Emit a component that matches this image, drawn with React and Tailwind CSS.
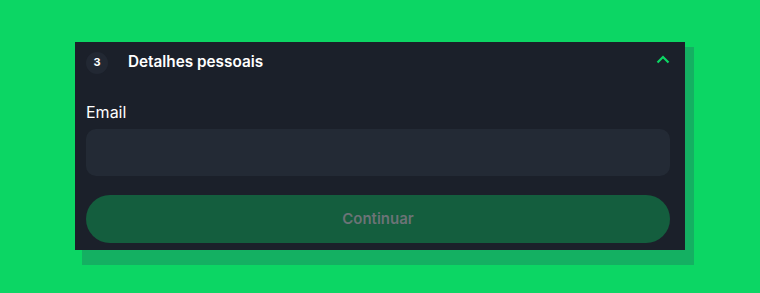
export default function App() {
  return (
    <div className="w-[760px] h-[293px] bg-[#0cd664] pt-[42px] pl-[75px]" style={{ fontFamily: "Inter, 'Noto Sans', sans-serif" }}>
      <div className="relative w-[610px] h-[208px]">
        <div className="absolute left-[7px] top-[5px] w-[612px] h-[218px] bg-[#14b062]" />
        <div className="relative w-[610px] h-[208px] bg-[#1b202a] pl-[11px] pr-[15px]">
          <div className="flex items-center h-[40px] pt-[1px]">
            <div className="w-[22px] h-[22px] rounded-full bg-[#222833] flex items-center justify-center text-white text-[11px] font-bold">3</div>
            <div className="ml-[20px] text-white text-[15.3px] font-semibold">Detalhes pessoais</div>
            <div className="ml-auto mr-0 -mt-[6px]">
              <svg width="14" height="9" viewBox="0 0 14 9" fill="none">
                <path d="M1.5 7.5L7 2L12.5 7.5" stroke="#0cd664" strokeWidth="2.2" />
              </svg>
            </div>
          </div>
          <div className="mt-[20px] text-white text-[16px] leading-[20px]">Email</div>
          <div className="mt-[7px] h-[47px] rounded-[10px] bg-[#232a35]" />
          <button className="mt-[19px] w-full h-[48px] rounded-full bg-[#145e3e] text-[#6b7376] text-[15px] font-semibold flex items-center justify-center">Continuar</button>
        </div>
      </div>
    </div>
  );
}
